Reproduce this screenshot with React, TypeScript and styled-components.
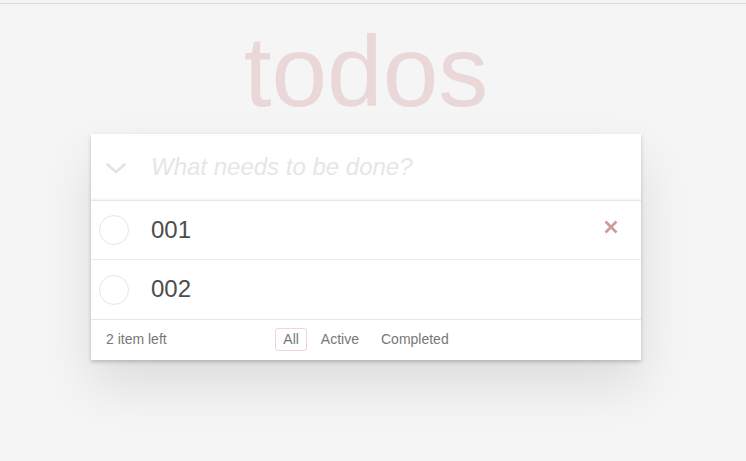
import React from "react";
import styled, { createGlobalStyle } from "styled-components";

const GlobalStyle = createGlobalStyle`
  html, body {
    margin: 0;
    padding: 0;
    background: #f5f5f5;
  }
  body {
    font-family: "Liberation Sans", Arial, Helvetica, sans-serif;
    font-size: 14px;
    color: #4d4d4d;
    -webkit-font-smoothing: antialiased;
  }
  * { box-sizing: border-box; }
`;

const Page = styled.div`
  margin-top: 3px;
  border-top: 1px solid #d9d9d9;
  padding-right: 14px;
  min-height: 457px;
`;

const Container = styled.section`
  width: 550px;
  margin: 0 auto;
`;

const Title = styled.h1`
  margin: 17px 0 13px;
  font-size: 100px;
  line-height: 100px;
  font-weight: 100;
  text-align: center;
  color: rgba(175, 47, 47, 0.15);
  text-rendering: optimizeLegibility;
`;

const Card = styled.div`
  background: #fff;
  box-shadow: 0 2px 4px 0 rgba(0, 0, 0, 0.2), 0 25px 50px 0 rgba(0, 0, 0, 0.1);
`;

const Header = styled.header`
  display: flex;
  align-items: stretch;
  box-shadow: inset 0 -2px 1px rgba(0, 0, 0, 0.03);
`;

const ToggleAll = styled.button`
  width: 49px;
  border: none;
  background: none;
  padding: 3px 0 0;
  margin: 0;
  display: flex;
  align-items: center;
  justify-content: center;
`;

const NewTodo = styled.input`
  flex: 1;
  min-width: 0;
  border: none;
  outline: none;
  background: transparent;
  padding: 16px 16px 16px 11px;
  font-family: inherit;
  font-size: 24px;
  line-height: 33.6px;
  height: 65.6px;
  color: #4d4d4d;
  &::placeholder {
    font-style: italic;
    font-weight: 300;
    color: #e6e6e6;
  }
`;

const List = styled.ul`
  list-style: none;
  margin: 0;
  padding: 0;
  border-top: 1px solid #e6e6e6;
`;

const Item = styled.li`
  display: flex;
  align-items: center;
  border-bottom: 1px solid #ededed;
  font-size: 24px;
  &:last-child {
    border-bottom: none;
  }
`;

const CheckCell = styled.div`
  width: 60px;
  padding-left: 8px;
  display: flex;
  align-items: center;
`;

const Circle = styled.span`
  display: block;
  width: 30px;
  height: 30px;
  border-radius: 50%;
  border: 1px solid #e6e6e6;
`;

const Label = styled.label`
  flex: 1;
  padding: 15px 0;
  line-height: 1.2;
  color: #4d4d4d;
  font-weight: 400;
`;

const Destroy = styled.button<{ $visible: boolean }>`
  width: 40px;
  height: 40px;
  margin-right: 10px;
  margin-bottom: 6px;
  border: none;
  background: none;
  padding: 0;
  display: flex;
  align-items: center;
  justify-content: center;
  visibility: ${(p) => (p.$visible ? "visible" : "hidden")};
`;

const Footer = styled.footer`
  display: grid;
  grid-template-columns: 1fr auto 1fr;
  align-items: start;
  height: 41px;
  padding: 10px 15px;
  border-top: 1px solid #e6e6e6;
  color: #777;
  font-size: 14px;
`;

const Count = styled.span`
  line-height: 18px;
`;

const Filters = styled.ul`
  list-style: none;
  margin: -2px 0 0;
  padding: 0;
  display: flex;
  gap: 6px;
`;

const FilterLink = styled.a<{ $selected?: boolean }>`
  display: block;
  padding: 3px 7px;
  line-height: 15px;
  border: 1px solid ${(p) => (p.$selected ? "rgba(175, 47, 47, 0.2)" : "transparent")};
  border-radius: 3px;
  color: inherit;
  text-decoration: none;
`;

const todos = [
  { id: 1, title: "001", hover: true },
  { id: 2, title: "002", hover: false },
];

export default function App() {
  return (
    <>
      <GlobalStyle />
      <Page>
        <Container>
          <Title>todos</Title>
          <Card>
            <Header>
              <ToggleAll aria-label="Mark all as complete">
                <svg width="20" height="11" viewBox="0 0 20 11">
                  <polyline
                    points="1.5,1.5 10,9 18.5,1.5"
                    fill="none"
                    stroke="#e3e3e3"
                    strokeWidth="2.6"
                    strokeLinecap="round"
                    strokeLinejoin="round"
                  />
                </svg>
              </ToggleAll>
              <NewTodo placeholder="What needs to be done?" />
            </Header>
            <List>
              {todos.map((t) => (
                <Item key={t.id}>
                  <CheckCell>
                    <Circle />
                  </CheckCell>
                  <Label>{t.title}</Label>
                  <Destroy $visible={t.hover} aria-label="Delete">
                    <svg width="14" height="14" viewBox="0 0 14 14">
                      <path
                        d="M1.5 1.5 L12.5 12.5 M12.5 1.5 L1.5 12.5"
                        stroke="#cc9a9a"
                        strokeWidth="2.6"
                        strokeLinecap="butt"
                      />
                    </svg>
                  </Destroy>
                </Item>
              ))}
            </List>
            <Footer>
              <Count>2 item left</Count>
              <Filters>
                <li>
                  <FilterLink href="#/" $selected>
                    All
                  </FilterLink>
                </li>
                <li>
                  <FilterLink href="#/active">Active</FilterLink>
                </li>
                <li>
                  <FilterLink href="#/completed">Completed</FilterLink>
                </li>
              </Filters>
              <span />
            </Footer>
          </Card>
        </Container>
      </Page>
    </>
  );
}
